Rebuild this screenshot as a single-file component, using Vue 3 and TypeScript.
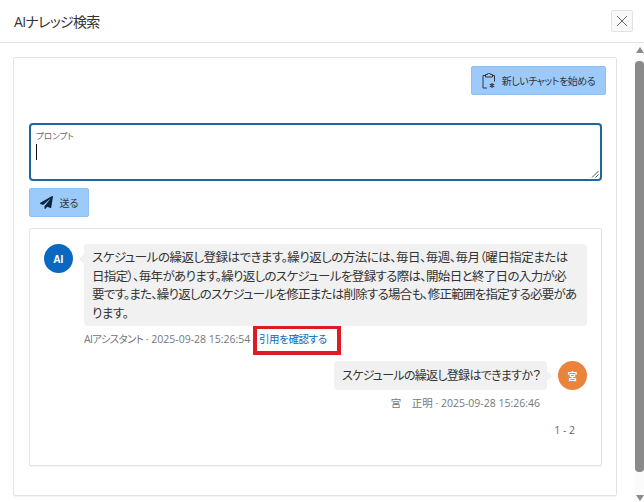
<script setup lang="ts">
const lines: { text: string; fit: string }[] = [
  { text: 'スケジュールの繰返し登録はできます。繰り返しの方法には、毎日、毎週、毎月（曜日指定または', fit: 'fit-a' },
  { text: '日指定）、毎年があります。繰り返しのスケジュールを登録する際は、開始日と終了日の入力が必', fit: 'fit-b' },
  { text: '要です。また、繰り返しのスケジュールを修正または削除する場合も、修正範囲を指定する必要があ', fit: 'fit-c' },
  { text: 'ります。', fit: 'fit-a' },
]
</script>

<template>
  <div class="dialog">
    <header class="head">
      <h1 class="title">AIナレッジ検索</h1>
      <button class="close" aria-label="閉じる">
        <svg width="12" height="12" viewBox="0 0 12 12"><path d="M1 1l10 10M11 1L1 11" stroke="#666" stroke-width="1" fill="none" /></svg>
      </button>
    </header>
    <div class="body">
      <main class="content">
        <section class="panel">
          <div class="toolbar">
            <button class="btn new">
              <svg width="14" height="16" viewBox="0 0 14 16" fill="none" stroke="#333" stroke-width="1">
                <path d="M3.5 2.5H1v12.5h4M10 2.5h2.5v6" />
                <path d="M3.5 1.5h2a1.5 1.5 0 0 1 3 0h2v2.5h-7z" />
                <path d="M10 10v5M7.8 11.3l4.4 2.4M12.2 11.3l-4.4 2.4" stroke-width="1.1" />
              </svg>
              <span class="new-label">新しいチャットを始める</span>
            </button>
          </div>
          <div class="prompt">
            <span class="prompt-label">プロンプト</span>
            <span class="caret"></span>
            <svg class="grip" width="8" height="8" viewBox="0 0 8 8"><path d="M7.5 1L1 7.5M7.5 4.5L4.5 7.5" stroke="#555" fill="none" /></svg>
          </div>
          <button class="btn send">
            <svg width="13" height="13" viewBox="0 0 512 512"><path fill="#10233c" d="M476 3L13 270c-18 10-16 36 3 44l106 44 286-252c5-5 12 2 8 7L176 405v82c0 24 29 33 43 15l64-78 125 52c14 6 31-3 33-18L511 28c3-20-18-35-35-25z" /></svg>
            <span>送る</span>
          </button>
          <section class="chat">
            <div class="row">
              <div class="avatar ai">AI</div>
              <div class="msg">
                <div class="bubble left">
                  <span v-for="line in lines" :key="line.text" class="line" :class="line.fit">{{ line.text }}</span>
                </div>
                <div class="meta">
                  <span class="meta-text"><span class="narrow">AIアシスタント</span> · 2025-09-28 15:26:54</span>
                  <a class="cite">引用を確認する</a>
                </div>
              </div>
            </div>
            <div class="row mine">
              <div class="msg-r">
                <div class="bubble right">スケジュールの繰返し登録はできますか？</div>
                <div class="meta-r">宮　正明 · 2025-09-28 15:26:46</div>
              </div>
              <div class="avatar me">宮</div>
            </div>
            <div class="pager">1 - 2</div>
          </section>
        </section>
      </main>
      <div class="scrollbar">
        <span class="arrow up"></span>
        <span class="thumb"></span>
        <span class="arrow down"></span>
      </div>
    </div>
  </div>
</template>

<style>
html, body { margin: 0; background: #fff; }
</style>

<style scoped>
.dialog {
  width: 644px;
  height: 502px;
  overflow: hidden;
  display: flex;
  flex-direction: column;
  background: #fff;
  color: #333;
  font-family: "Open Sans", "Noto Sans CJK JP", sans-serif;
  font-feature-settings: "palt";
}
.head {
  height: 42px;
  flex: none;
  box-sizing: content-box;
  border-bottom: 1px solid #e4e4e4;
  display: flex;
  align-items: center;
  justify-content: space-between;
  padding: 0 11px 0 14px;
}
.title { margin: 0; font-size: 14px; font-weight: 400; color: #333; letter-spacing: -0.7px; }
.close {
  width: 22px;
  height: 22px;
  padding: 0;
  margin-top: -1px;
  display: flex;
  align-items: center;
  justify-content: center;
  background: #f8f8f8;
  border: 1px solid #e2e2e2;
  border-radius: 2px;
}
.body { flex: 1; display: flex; min-height: 0; }
.content { flex: 1; padding: 14px 18px 0 13px; min-width: 0; }
.panel {
  box-sizing: border-box;
  height: 439px;
  border: 1px solid #e4e4e4;
  border-radius: 2px;
  padding: 8px 15px 0;
  box-shadow: 0 1px 1px rgba(0,0,0,.05);
}
.toolbar { display: flex; justify-content: flex-end; height: 29px; margin-right: -5px; }
.btn {
  display: flex;
  align-items: center;
  justify-content: center;
  background: #9ccbfb;
  border: 1px solid #8fc0f2;
  border-radius: 2px;
  color: #333;
  font: inherit;
  font-size: 10px;
  padding: 0;
  box-sizing: border-box;
}
.new { width: 135px; height: 29px; gap: 6px; }
.new-label { letter-spacing: -0.5px; }
.prompt {
  position: relative;
  box-sizing: border-box;
  margin-top: 28px;
  height: 58px;
  width: 573px;
  border: 2px solid #1f669f;
  border-radius: 4px;
  padding: 5px 5px;
}
.prompt-label { display: block; font-size: 8.5px; line-height: 12px; color: #666; }
.caret { display: block; width: 1px; height: 16px; margin-top: 2px; background: #111; }
.grip { position: absolute; right: 1px; bottom: 1px; }
.send { margin-top: 7px; width: 60px; height: 29px; gap: 7px; }
.chat {
  box-sizing: border-box;
  margin-top: 11px;
  width: 573px;
  height: 238px;
  border: 1px solid #e4e4e4;
  border-radius: 2px;
  padding: 15px 14px 0;
  box-shadow: 0 1px 1px rgba(0,0,0,.06);
}
.row { display: flex; gap: 11px; }
.mine { justify-content: flex-end; gap: 11px; margin-top: 6px; }
.avatar {
  width: 29px;
  height: 29px;
  flex: none;
  border-radius: 50%;
  display: flex;
  align-items: center;
  justify-content: center;
  color: #fff;
  font-size: 10px;
  font-weight: 700;
}
.ai { background: #0b68c0; }
.me { background: #ea833c; }
.msg { width: 503px; }
.bubble {
  position: relative;
  background: #f1f1f1;
  border-radius: 4px;
  font-size: 12.5px;
  color: #333;
}
.left { padding: 5px 8px 3px 8px; line-height: 18.6px; box-sizing: border-box; height: 82px; }
.line { display: block; white-space: nowrap; }
.fit-a { letter-spacing: -0.5px; }
.fit-b { letter-spacing: -0.65px; }
.fit-c { letter-spacing: -0.75px; }
.left::before {
  content: "";
  position: absolute;
  left: -5px;
  top: 10px;
  border: 5px solid transparent;
  border-left: 0;
  border-right-color: #f1f1f1;
}
.right { padding: 0 8px; line-height: 29px; width: 213px; box-sizing: border-box; white-space: nowrap; font-size: 12px; letter-spacing: -0.7px; }
.right::after {
  content: "";
  position: absolute;
  right: -5px;
  top: 10px;
  border: 5px solid transparent;
  border-right: 0;
  border-left-color: #f1f1f1;
}
.meta {
  display: flex;
  align-items: center;
  height: 30px;
  margin-top: -1px;
  font-size: 10.5px;
  color: #777;
  white-space: nowrap;
}
.meta-text { width: 169px; flex: none; margin-top: -3px; }
.narrow { letter-spacing: -0.7px; }
.cite {
  box-sizing: border-box;
  height: 30px;
  width: 88px;
  border: 4px solid #df1a22;
  display: flex;
  align-items: center;
  padding: 0 0 3px 2px;
  color: #0b68b8;
  letter-spacing: -0.4px;
}
.msg-r { display: flex; flex-direction: column; align-items: flex-end; }
.meta-r { margin-top: 6px; margin-right: 7px; font-size: 10.5px; line-height: 14px; color: #777; white-space: nowrap; }
.pager { margin-top: 13px; text-align: right; padding-right: 12px; font-size: 10.5px; line-height: 14px; color: #666; }
.scrollbar {
  flex: none;
  width: 9px;
  display: flex;
  flex-direction: column;
  align-items: center;
  padding-top: 4px;
  background: #fbfbfb;
}
.arrow { width: 0; height: 0; border-left: 4.5px solid transparent; border-right: 4.5px solid transparent; flex: none; }
.up { border-bottom: 6px solid #8a8a8a; }
.down { border-top: 6px solid #8a8a8a; margin-top: 23px; }
.thumb { width: 9px; height: 411px; margin-top: 8px; background: #8a8a8a; border-radius: 4px; flex: none; }
</style>
